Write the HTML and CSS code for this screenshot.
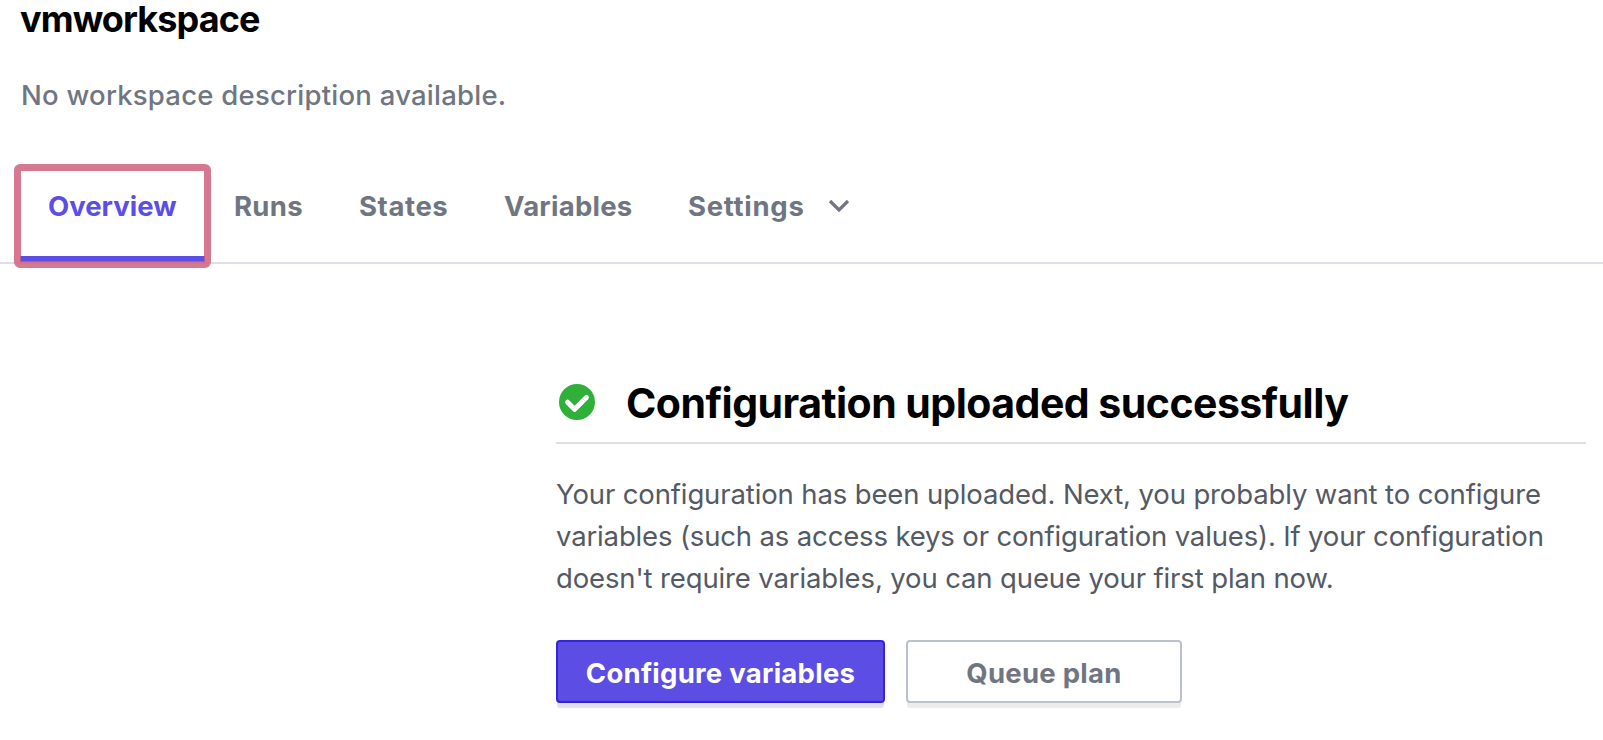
FILE: index.html
```html
<!DOCTYPE html>
<html lang="en">
<head>
<meta charset="utf-8">
<title>vmworkspace</title>
<link rel="stylesheet" href="styles.css">
</head>
<body>
<header class="head">
  <h1 class="title"><span>vmworkspace</span></h1>
  <p class="description"><span>No workspace description available.</span></p>
</header>
<nav class="tabs">
  <a class="tab tab-active"><span>Overview</span></a>
  <a class="tab tab-runs"><span>Runs</span></a>
  <a class="tab tab-states"><span>States</span></a>
  <a class="tab tab-variables"><span>Variables</span></a>
  <a class="tab tab-settings"><span>Settings</span>
    <svg class="chevron" viewBox="0 0 22 14" width="22" height="14"><path d="M2 2 11 11 20 2" fill="none" stroke="currentColor" stroke-width="3.2"/></svg>
  </a>
</nav>
<main class="content">
  <div class="heading-row">
    <svg class="check" viewBox="0 0 36 36" width="36" height="36"><circle cx="18" cy="18" r="18" fill="#2eb039"/><path d="M8.6 18.2 15.6 25.2 27.4 13.4" fill="none" stroke="#fff" stroke-width="4.2"/><path d="M8.6 18.2 15.6 25.2 27.4 13.4" fill="none" stroke="#fff" stroke-width="5" stroke-linecap="round" stroke-linejoin="round"/></svg>
    <h2 class="heading"><span>Configuration uploaded successfully</span></h2>
  </div>
  <p class="text"><span class="line-1">Your configuration has been uploaded. Next, you probably want to configure</span><br><span class="line-2">variables (such as access keys or configuration values). If your configuration</span><br><span class="line-3">doesn't require variables, you can queue your first plan now.</span></p>
  <div class="actions">
    <button class="button button-primary"><span>Configure variables</span></button>
    <button class="button button-secondary"><span>Queue plan</span></button>
  </div>
</main>
</body>
</html>
```

FILE: styles.css
```css
*, *::after { box-sizing: border-box; }
body {
  margin: 0;
  height: 740px;
  overflow: hidden;
  background: #fff;
  font-family: Inter, "Liberation Sans", sans-serif;
}
h1, h2, p { margin: 0; font-weight: inherit; white-space: nowrap; }
.head { height: 164px; padding-left: 20px; }
.title { height: 74px; font-size: 36px; line-height: 38px; font-weight: 700; letter-spacing: -0.9px; color: #000; }
.description { padding-left: 1px; font-size: 27.5px; line-height: 42px; font-weight: 500; letter-spacing: 0.24px; color: #6f7682; }
.tabs {
  display: flex;
  height: 100px;
  padding-left: 20px;
  border-bottom: 2px solid #dce0e6;
  color: #6f7682;
  font-size: 27.5px;
  line-height: 34px;
  font-weight: 700;
}
.tab { display: flex; padding: 25px 28px 0; white-space: nowrap; }
.tab-active { position: relative; width: 185px; color: #5c4ee5; border-bottom: 6px solid #5c4ee5; }
.tab-active::after {
  content: "";
  position: absolute;
  left: -6px;
  top: 0;
  width: 197px;
  height: 104px;
  border: 7px solid rgba(205, 90, 118, 0.82);
  border-radius: 6px;
}
.tab-runs { width: 125px; padding-left: 29px; letter-spacing: 0.3px; }
.tab-states { width: 146px; padding-left: 29px; letter-spacing: 0.6px; }
.tab-variables { width: 184px; letter-spacing: 0.25px; }
.tab-settings span { width: 116px; letter-spacing: 0.7px; }
.chevron { margin: 10px 0 0 24px; }
.content { width: 1030px; margin-left: 556px; padding-top: 110px; }
.heading-row { display: flex; align-items: flex-start; height: 70px; padding: 10px 0 0 3px; border-bottom: 2px solid #dce0e6; }
.heading { margin: -6px 0 0 31px; font-size: 41px; line-height: 50px; font-weight: 700; letter-spacing: -0.52px; color: #000; }
.text { margin-top: 29px; font-size: 27.5px; line-height: 42px; letter-spacing: -0.13px; color: #535965; }
.actions { display: flex; gap: 21px; margin-top: 41px; }
.button {
  height: 63px;
  padding: 2px 0 0;
  border: 2px solid;
  border-radius: 4px;
  font: 700 27.5px/34px Inter, "Liberation Sans", sans-serif;
  letter-spacing: 0.26px;
  white-space: nowrap;
}
.button-primary { width: 329px; background: #5c4ee5; border-color: #3722df; color: #fff; box-shadow: 0 6px 1px -1px #dfe1e4; }
.button-secondary { width: 276px; background: #fff; border-color: #bac1cc; color: #6f7682; box-shadow: 0 6px 1px -1px #ebecee; }
.line-2 { letter-spacing: -0.15px; }
```
